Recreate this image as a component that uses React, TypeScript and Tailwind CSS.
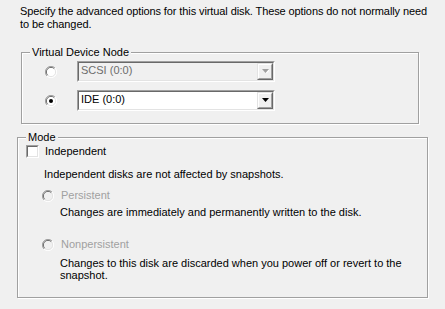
import React from "react";

const font = { fontFamily: '"Liberation Sans", Arial, sans-serif' };

function Radio({ checked = false, disabled = false }: { checked?: boolean; disabled?: boolean }) {
  const fill = disabled ? "#f0f0f0" : "#ffffff";
  return (
    <svg width="12" height="12" viewBox="0 0 12 12" className="shrink-0">
      <circle cx="6" cy="6" r="5.5" fill={fill} />
      <path d="M10 2 A5.5 5.5 0 0 0 2 10" fill="none" stroke="#a0a0a0" strokeWidth="1" />
      <path d="M9.3 2.7 A4.5 4.5 0 0 0 2.7 9.3" fill="none" stroke="#696969" strokeWidth="1" />
      <path d="M2 10 A5.5 5.5 0 0 0 10 2" fill="none" stroke="#ffffff" strokeWidth="1" />
      <path d="M2.7 9.3 A4.5 4.5 0 0 0 9.3 2.7" fill="none" stroke="#e3e3e3" strokeWidth="1" />
      {checked && <circle cx="6" cy="6" r="2" fill={disabled ? "#a0a0a0" : "#000"} />}
    </svg>
  );
}

function Combo({ text, disabled = false }: { text: string; disabled?: boolean }) {
  return (
    <div
      className={`flex h-[21px] w-[198px] border-t border-l border-[#a0a0a0] border-r border-b border-r-white border-b-white ${disabled ? "bg-[#f0f0f0]" : "bg-white"}`}
    >
      <div className="flex flex-1 border-t border-l border-[#696969] border-r border-b border-r-[#e3e3e3] border-b-[#e3e3e3]">
        <div
          className={`flex-1 pl-[2px] text-[11px] leading-[15px] ${disabled ? "text-[#6d6d6d]" : "text-black"}`}
          style={font}
        >
          {text}
        </div>
        <div className="w-[16px] h-[17px] border-t border-l border-[#e3e3e3] border-r border-b border-r-[#696969] border-b-[#696969]">
          <div className="w-full h-full border-t border-l border-white border-r border-b border-r-[#a0a0a0] border-b-[#a0a0a0] bg-[#f0f0f0] flex items-center justify-center">
            <svg width="7" height="5" viewBox="0 0 7 5">
              {disabled && <path d="M1 1 L8 1 L4.5 4.5 Z" fill="#ffffff" />}
              <path d="M0 0 L7 0 L3.5 4 Z" fill={disabled ? "#a0a0a0" : "#000"} />
            </svg>
          </div>
        </div>
      </div>
    </div>
  );
}

export default function App() {
  return (
    <div className="w-[445px] h-[309px] bg-[#f0f0f0] overflow-hidden text-[11px] leading-[13px] text-black" style={font}>
      <div className="pl-[20px] pt-[5px] whitespace-nowrap tracking-[-0.1px]">
        <div>Specify the advanced options for this virtual disk. These options do not normally need</div>
        <div>to be changed.</div>
      </div>

      {/* Virtual Device Node group */}
      <div className="relative ml-[21px] mt-[21px] w-[398px] h-[72px] border border-[#a0a0a0] shadow-[1px_1px_0_#fff,inset_1px_1px_0_#fff]">
        <span className="absolute left-[8px] top-[-7px] bg-[#f0f0f0] px-[2px] leading-[13px]">Virtual Device Node</span>
        <div className="flex flex-col gap-[8px] pt-[8px] pl-[23px]">
          <div className="flex items-center">
            <div className="w-[32px]"><Radio /></div>
            <Combo text="SCSI (0:0)" disabled />
          </div>
          <div className="flex items-center">
            <div className="w-[32px]"><Radio checked /></div>
            <Combo text="IDE (0:0)" />
          </div>
        </div>
      </div>

      {/* Mode group */}
      <div className="relative ml-[17px] mt-[13px] w-[411px] h-[161px] border border-[#a0a0a0] shadow-[1px_1px_0_#fff,inset_1px_1px_0_#fff]">
        <span className="absolute left-[8px] top-[-7px] bg-[#f0f0f0] px-[2px] leading-[13px]">Mode</span>
        <div className="pl-[8px] pt-[7px]">
          <div className="flex items-center h-[13px]">
            <div className="w-[13px] h-[13px] border border-t-[#a0a0a0] border-l-[#a0a0a0] border-r-white border-b-white">
              <div className="w-full h-full border border-t-[#696969] border-l-[#696969] border-r-[#e3e3e3] border-b-[#e3e3e3] bg-white" />
            </div>
            <span className="ml-[6px]">Independent</span>
          </div>
          <div className="ml-[18px] mt-[10px]">Independent disks are not affected by snapshots.</div>
          <div className="ml-[16px] mt-[8px] flex items-center h-[13px]">
            <Radio disabled />
            <span className="ml-[7px] text-[#a0a0a0]">Persistent</span>
          </div>
          <div className="ml-[34px] mt-[4px]">Changes are immediately and permanently written to the disk.</div>
          <div className="ml-[16px] mt-[19px] flex items-center h-[13px]">
            <Radio disabled />
            <span className="ml-[7px] text-[#a0a0a0]">Nonpersistent</span>
          </div>
          <div className="ml-[34px] mt-[6px] whitespace-nowrap leading-[12px]">
            <div>Changes to this disk are discarded when you power off or revert to the</div>
            <div>snapshot.</div>
          </div>
        </div>
      </div>
    </div>
  );
}
